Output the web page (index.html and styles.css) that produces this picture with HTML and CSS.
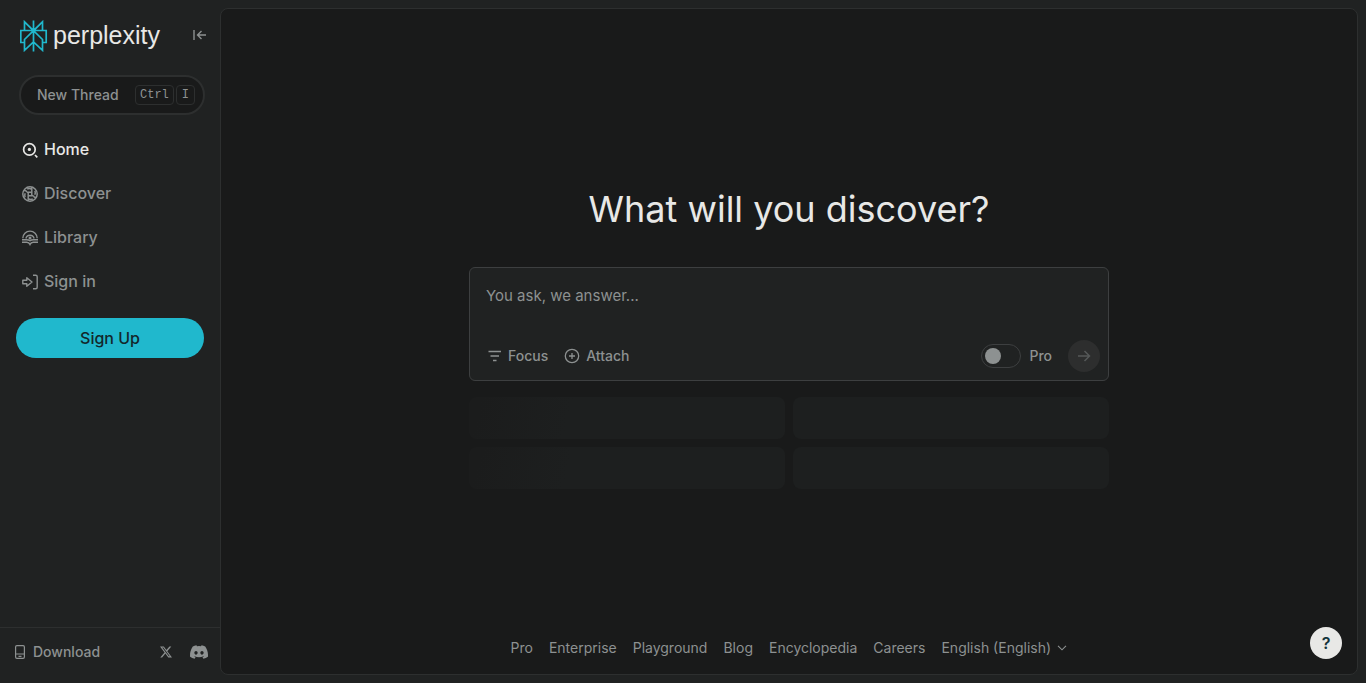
FILE: index.html
```html
<!DOCTYPE html>
<html lang="en">
<head>
<meta charset="utf-8">
<meta name="viewport" content="width=device-width, initial-scale=1">
<title>Perplexity</title>
<link rel="stylesheet" href="styles.css">
</head>
<body>
<div class="app">
  <aside class="sidebar">
    <div class="brand">
      <a class="logo" href="#">
        <svg class="logo-mark" width="28" height="32" viewBox="0 0 28 32" fill="none" stroke="currentColor" stroke-width="1.7" aria-hidden="true">
          <path d="M13.5 0.5v31M4.5 10.5V1.8l9 8.9 9-8.9v8.7M4.5 22.5H0.8v-12h25.4v12h-3.7M13.5 10.7l-9 8.8v10.8l9-8.3 9 8.3V19.5z"/>
        </svg>
        <span class="wordmark">perplexity</span>
      </a>
      <button class="collapse" aria-label="Collapse sidebar">
        <svg width="14" height="12" viewBox="0 0 14 12" fill="none" stroke="currentColor" stroke-width="1.4"><path d="M1 1v10M13 6H4.5M8.5 2l-4 4 4 4"/></svg>
      </button>
    </div>
    <button class="new-thread"><span>New Thread</span><span class="keys"><kbd>Ctrl</kbd><kbd>I</kbd></span></button>
    <nav class="nav" aria-label="Main">
      <a class="nav-item current" href="#">
        <svg width="16" height="16" viewBox="0 0 16 16" fill="none" stroke="currentColor" stroke-width="1.7"><circle cx="7.4" cy="7.4" r="5.800"/><circle cx="7.400" cy="7.400" r="1.600" fill="currentColor" stroke="none"/><path d="M13 13l2.300 2.300"/></svg>
        <span>Home</span></a>
      <a class="nav-item" href="#">
        <svg width="16" height="16" viewBox="0 0 16 16" fill="none" stroke="currentColor" stroke-width="1.5"><circle cx="8" cy="8" r="7.2"/><path d="M9.800 1.200V9.700M5 6.200h4.800M6.200 6.200v8.600M6.200 9.700h5.200M1.800 4.600c1.500-.5 2.400-.2 3.200 1.600M14.200 11.400c-1.500.5-2.200-.2-2.800-1.700M5.200 3c1.500-.7 3-.5 4.600.2M12.900 4.800c.6 1.500.5 2.600-.1 3.900M3.100 11.200c-.6-1.500-.5-2.600.1-3.900M10.800 13c-1.500.7-3 .5-4.600-.2"/></svg>
        <span>Discover</span></a>
      <a class="nav-item" href="#">
        <svg width="16" height="16" viewBox="0 0 16 16" fill="none" stroke="currentColor" stroke-width="1.4"><path d="M.8 8.300a7.200 7.200 0 0 1 14.400 0M3.900 8.500a4.200 4.200 0 0 1 8.200 0M0 9.700h4.500c1.700 0 2.500.2 3.500 1.100 1-.9 1.800-1.100 3.500-1.100H16M0 12.200h4.800c1.700 0 2.500.6 3.200 2.200.7-1.600 1.500-2.200 3.200-2.200H16"/><circle cx="8" cy="8" r="1.500" fill="currentColor" stroke="none"/></svg>
        <span>Library</span></a>
      <a class="nav-item" href="#">
        <svg width="16" height="16" viewBox="0 0 16 16" fill="none" stroke="currentColor" stroke-width="1.4" stroke-linejoin="round"><path d="M.8 6.200h4V3.700L10 8l-5.200 4.300V9.800h-4zM11 1.300h2.700c1 0 1.500.5 1.500 1.500v10.400c0 1-.5 1.500-1.500 1.500H11"/></svg>
        <span>Sign in</span></a>
    </nav>
    <button class="sign-up">Sign Up</button>
    <div class="sidebar-foot">
      <a class="download" href="#">
        <svg width="10" height="14" viewBox="0 0 10 14" fill="none" stroke="currentColor" stroke-width="1.2"><rect x=".6" y=".6" width="8.800" height="12.800" rx="1.300"/><path d="M.6 9h8.800M3.500 11.300h3"/></svg>
        Download</a>
      <a class="social" href="#" aria-label="X">
        <svg width="12" height="12" viewBox="0 0 24 24" fill="currentColor"><path d="M18.900 1.200h3.700l-8 9.200L24 22.800h-7.400l-5.800-7.600-6.600 7.600H.5l8.600-9.800L0 1.200h7.600l5.200 6.900zm-1.300 19.500h2L6.500 3.200H4.300z"/></svg>
      </a>
      <a class="social" href="#" aria-label="Discord">
        <svg width="18" height="14" viewBox="0 0 24 18" fill="currentColor"><path d="M20.300 1.500A19.800 19.800 0 0 0 15.400 0l-.7 1.300a18.300 18.300 0 0 0-5.400 0L8.600 0a19.700 19.700 0 0 0-4.900 1.500C.6 6.200-.3 10.700.1 15.200a19.900 19.900 0 0 0 6 2.800l1.300-2a13 13 0 0 1-1.900-.9l.5-.4c4 1.800 8.100 1.800 12 0l.5.4c-.6.4-1.200.7-1.900.9l1.300 2a19.800 19.800 0 0 0 6-2.800c.5-5.200-.8-9.700-3.600-13.700zM8 12.500c-1.200 0-2.200-1.100-2.200-2.500S6.800 7.600 8 7.600s2.200 1.100 2.200 2.400-1 2.500-2.200 2.500zm8 0c-1.200 0-2.200-1.100-2.200-2.500s1-2.400 2.200-2.400 2.200 1.100 2.200 2.400-1 2.500-2.200 2.500z"/></svg>
      </a>
    </div>
  </aside>
  <main class="panel">
    <section class="hero">
      <h1 class="headline">What will you discover?</h1>
      <form class="ask">
        <textarea class="question" rows="1" placeholder="You ask, we answer..." aria-label="Question"></textarea>
        <div class="tools">
          <button class="tool" type="button">
            <svg width="14" height="12" viewBox="0 0 14 12" fill="none" stroke="currentColor" stroke-width="1.400"><path d="M.5 1.500h12.500M2.500 6h8.500M5 10.500h3.500"/></svg>
            Focus</button>
          <button class="tool" type="button">
            <svg width="16" height="16" viewBox="0 0 16 16" fill="none" stroke="currentColor" stroke-width="1.300"><circle cx="8" cy="8" r="6.700"/><path d="M8 5v6M5 8h6"/></svg>
            Attach</button>
          <label class="pro"><input class="switch" type="checkbox">Pro</label>
          <button class="submit" type="button" aria-label="Submit">
            <svg width="14" height="12" viewBox="0 0 14 12" fill="none" stroke="currentColor" stroke-width="1.500"><path d="M1 6h11.500M7.500 1l5 5-5 5"/></svg>
          </button>
        </div>
      </form>
      <div class="suggestions" aria-hidden="true">
        <div class="suggestion"></div><div class="suggestion"></div>
        <div class="suggestion"></div><div class="suggestion"></div>
      </div>
    </section>
    <footer class="links">
      <a href="#">Pro</a><a href="#">Enterprise</a><a href="#">Playground</a><a href="#">Blog</a><a href="#">Encyclopedia</a><a href="#">Careers</a>
      <span class="language">
        <select aria-label="Language"><option>English (English)</option></select>
        <svg width="10" height="6" viewBox="0 0 10 6" fill="none" stroke="currentColor" stroke-width="1.100" aria-hidden="true"><path d="M1 .8l4 4 4-4"/></svg>
      </span>
    </footer>
  </main>
  <button class="help" aria-label="Help">?</button>
</div>
</body>
</html>
```
FILE: styles.css
```css
:root {
  --base: #191a1a;
  --raised: #202222;
  --line: #2d2f2f;
  --text: #e8e8e6;
  --muted: #8d9191;
  --accent: #20b8cd;
}

* { box-sizing: border-box; }

body {
  margin: 0;
  background: var(--raised);
  color: var(--muted);
  font: 14px/20px Inter, "Liberation Sans", sans-serif;
}

a { color: inherit; text-decoration: none; }
button, select, textarea { font: inherit; color: inherit; }
button { margin: 0; padding: 0; border: 0; background: none; cursor: pointer; }
svg { display: block; flex: none; }

.app { display: flex; min-height: 100vh; }

.sidebar {
  display: flex;
  flex-direction: column;
  flex: none;
  width: 220px;
  padding-top: 20px;
}

.brand {
  display: flex;
  align-items: center;
  justify-content: space-between;
  padding: 0 13px 0 20px;
}
.logo { display: flex; align-items: center; gap: 5px; }
.logo-mark { color: var(--accent); }
.wordmark {
  padding-bottom: 2px;
  color: var(--text);
  font: 25px/28px "Liberation Sans", Arial, sans-serif;
}
.collapse { padding-bottom: 2px; }

.new-thread {
  display: flex;
  align-items: center;
  justify-content: space-between;
  height: 40px;
  margin: 23px 15px 0 19px;
  padding: 0 8px 0 16px;
  border: 2px solid var(--line);
  border-radius: 20px;
  background: var(--base);
  font-weight: 500;
}
.keys { display: flex; gap: 2px; }
kbd {
  padding: 0 4px;
  border: 1px solid var(--line);
  border-radius: 4px;
  font: 12px/18px "Liberation Mono", monospace;
}
kbd:last-child { padding: 0 5px; }

.nav { display: grid; gap: 4px; padding: 15px 22px 0; }
.nav-item {
  display: flex;
  align-items: center;
  gap: 6px;
  height: 40px;
  font-size: 16px;
  font-weight: 500;
}
.nav-item span { padding-bottom: 2px; }
.current { color: var(--text); }

.sign-up {
  height: 40px;
  margin: 16px 16px 0;
  border-radius: 20px;
  background: var(--accent);
  color: #13272b;
  font-size: 16px;
  font-weight: 500;
}

.sidebar-foot {
  display: flex;
  align-items: center;
  gap: 18px;
  height: 56px;
  margin-top: auto;
  padding: 0 12px 8px 15px;
  border-top: 1px solid var(--line);
}
.download {
  display: flex;
  align-items: center;
  gap: 8px;
  margin-right: auto;
  font-weight: 500;
}

.panel {
  display: grid;
  grid-template-rows: 1fr auto 1fr;
  flex: 1;
  min-width: 0;
  margin: 8px 8px 8px 0;
  padding: 0 16px;
  border: 1px solid var(--line);
  border-radius: 8px;
  background: var(--base);
}
.hero { grid-row: 2; width: 100%; max-width: 640px; margin: 0 auto; padding-bottom: 5px; }
.headline {
  margin: 0 0 38px;
  color: var(--text);
  font-size: 36px;
  font-weight: 400;
  line-height: 40px;
  text-align: center;
}

.ask {
  padding: 16px 8px 8px 16px;
  border: 1px solid #3d3f40;
  border-radius: 6px;
  background: var(--raised);
}
.question {
  display: block;
  width: 100%;
  height: 24px;
  margin-bottom: 32px;
  padding: 0;
  border: 0;
  outline: 0;
  background: none;
  resize: none;
  font-size: 15px;
  line-height: 24px;
}
.question::placeholder { color: var(--muted); }
.tools { display: flex; align-items: center; gap: 16px; padding-left: 2px; }
.tool { display: flex; align-items: center; gap: 6px; font-weight: 500; }
.pro { display: flex; align-items: center; gap: 8px; margin-left: auto; font-weight: 500; }
.switch {
  display: flex;
  align-items: center;
  width: 40px;
  height: 24px;
  margin: 0;
  padding: 0 3px;
  appearance: none;
  border: 1px solid #3d3f40;
  border-radius: 12px;
}
.switch::before {
  width: 16px;
  height: 16px;
  border-radius: 50%;
  background: var(--muted);
  content: "";
}
.switch:checked { justify-content: flex-end; }
.submit {
  display: grid;
  place-items: center;
  width: 32px;
  height: 32px;
  border-radius: 50%;
  background: #2d2e2e;
  color: #555858;
}

.suggestions {
  display: grid;
  grid-template-columns: 1fr 1fr;
  gap: 8px;
  margin-top: 16px;
}
.suggestion {
  height: 42px;
  border-radius: 8px;
  background: #1d1f1f;
}
.suggestion:nth-child(odd) { background: linear-gradient(105deg, #1b1c1c 4%, #1d1f1f 32%); }

.links {
  display: flex;
  flex-wrap: wrap;
  grid-row: 3;
  align-self: end;
  justify-content: center;
  gap: 4px 16px;
  padding-bottom: 16px;
}
.language { display: flex; align-items: center; gap: 6px; }
.language select { padding: 0; appearance: none; border: 0; background: none; }

.help {
  position: fixed;
  right: 24px;
  bottom: 24px;
  width: 32px;
  height: 32px;
  border-radius: 50%;
  background: var(--text);
  color: #13343b;
  font-size: 16px;
  font-weight: 600;
}
```
